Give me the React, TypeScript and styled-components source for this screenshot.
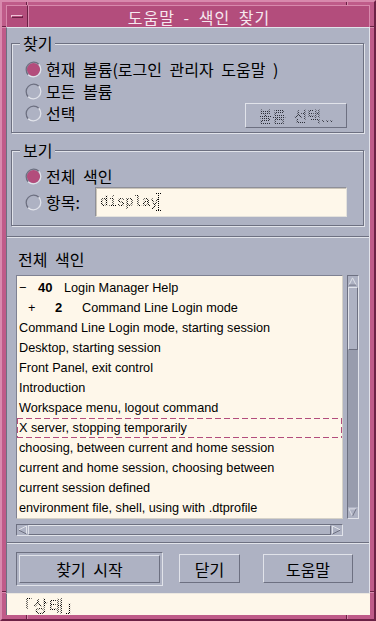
import React from "react";
import styled, { createGlobalStyle, css } from "styled-components";

// palette taken from the CDE dialog
const C = {
  frame: "#bf5b89",
  frameLight: "#d889ad",
  frameDark: "#6c2145",
  title: "#b34d7c",
  titleText: "#f6e8ef",
  body: "#aeb2c3",
  light: "#e1e3ea",
  dark: "#6d7081",
  trough: "#989cad",
  cream: "#fef7ea",
  accent: "#b34d7c",
};

const EN = `"Liberation Sans", Arial, sans-serif`;

// the bitmap korean font has wide blanks, so widen the spaces a bit
const kr = (size: number, lh = 18) => css`
  font: ${size}px/${lh}px "Noto Sans CJK KR", "Noto Sans", sans-serif;
  word-spacing: 4px;
`;

const GlobalStyle = createGlobalStyle`
  html, body { margin: 0; padding: 0; background: ${C.body}; }
  * { box-sizing: border-box; }
`;

const raised = css`
  border: 1px solid;
  border-color: ${C.light} ${C.dark} ${C.dark} ${C.light};
`;

const sunken = css`
  border: 1px solid;
  border-color: ${C.dark} ${C.light} ${C.light} ${C.dark};
`;

// disabled motif text is drawn as a 50% stipple
const stipple = (color: string) => css`
  background-image: repeating-conic-gradient(${color} 0 25%, transparent 0 50%);
  background-size: 2px 2px;
  -webkit-background-clip: text;
  background-clip: text;
  color: transparent;
`;

// STYLE
const Frame = styled.div`
  width: 376px;
  height: 621px;
  display: flex;
  flex-direction: column;
  padding: 3px 4px 4px 4px;
  border: 2px solid;
  border-color: ${C.frameLight} ${C.frameDark} ${C.frameDark} ${C.frameLight};
  background-color: ${C.frame};
  background-image: linear-gradient(${C.frameDark}, ${C.frameDark}),
    linear-gradient(${C.frameLight}, ${C.frameLight}),
    linear-gradient(${C.frameDark}, ${C.frameDark}),
    linear-gradient(${C.frameLight}, ${C.frameLight}),
    linear-gradient(${C.frameDark}, ${C.frameDark}),
    linear-gradient(${C.frameLight}, ${C.frameLight}),
    linear-gradient(${C.frameDark}, ${C.frameDark}),
    linear-gradient(${C.frameLight}, ${C.frameLight});
  background-size: 1px 100%, 1px 100%, 1px 100%, 1px 100%, 100% 1px, 100% 1px,
    100% 1px, 100% 1px;
  background-position: 24px 0, 25px 0, 344px 0, 345px 0, 0 24px, 0 25px, 0 589px,
    0 590px;
  background-repeat: no-repeat;
`;

const TitleBar = styled.div`
  height: 22px;
  display: flex;
  background: ${C.title};
`;

const MenuButton = styled.div`
  width: 22px;
  display: flex;
  align-items: center;
  justify-content: center;
  border-top: 1px solid ${C.frameLight};
  border-left: 1px solid ${C.frameLight};
  border-right: 1px solid ${C.frameDark};
`;

const MenuDash = styled.span`
  width: 12px;
  height: 3px;
  border: 1px solid;
  border-color: #efc2d6 ${C.frameDark} ${C.frameDark} #efc2d6;
`;

const Title = styled.div`
  flex: 1;
  display: flex;
  align-items: center;
  justify-content: center;
  color: ${C.titleText};
  ${kr(16, 20)};
  letter-spacing: 1px;
  border-top: 1px solid ${C.frameLight};
  border-left: 1px solid ${C.frameLight};
  border-right: 1px solid ${C.frameLight};
`;

const Body = styled.div`
  flex: 1;
  display: flex;
  flex-direction: column;
  background: ${C.body};
  border-top: 1px solid ${C.light};
  border-left: 1px solid ${C.dark};
  border-right: 1px solid ${C.light};
  color: #000;
`;

const SearchArea = styled.div`
  padding: 6px 5px 0 4px;
`;

const Group = styled.fieldset<{ $gap?: number }>`
  margin: ${(p) => p.$gap ?? 0}px 0 0 0;
  padding: 6px 16px 8px 13px;
  border: 1px solid ${C.dark};
  box-shadow: inset 1px 1px 0 ${C.light}, 1px 1px 0 ${C.light};
  min-width: 0;
`;

const Legend = styled.legend`
  margin-left: -5px;
  padding: 0 3px;
  ${kr(16)};
  background: ${C.body};
`;

const OptionRow = styled.div<{ $h?: number }>`
  display: flex;
  align-items: center;
  height: ${(p) => p.$h ?? 22}px;
`;

const Option = styled.span`
  display: flex;
  align-items: center;
  gap: 4px;
  ${kr(16)};
  white-space: nowrap;
`;

const SmallButton = styled.div`
  ${raised};
  margin-left: auto;
  align-self: flex-start;
  margin-top: 1px;
  width: 102px;
  height: 25px;
  display: flex;
  align-items: center;
  justify-content: center;
  ${kr(15)};
  span {
    ${stipple("#2c2e38")};
  }
`;

const Field = styled.div`
  margin-left: auto;
  width: 252px;
  height: 30px;
  display: flex;
  align-items: center;
  padding-left: 4px;
  background: ${C.cream};
  border: 1px solid;
  border-color: #8e8f99 #e4e2dc #e4e2dc #8e8f99;
  box-shadow: inset 1px 1px 0 #cbc5b9;
  font: 14px/18px "Liberation Mono", monospace;
  span {
    ${stipple("#000")};
  }
`;

const Separator = styled.div<{ $mt?: number }>`
  margin-top: ${(p) => p.$mt ?? 0}px;
  border-top: 1px solid ${C.dark};
  border-bottom: 1px solid ${C.light};
`;

const ListSection = styled.div`
  padding: 12px 10px 6px 9px;
`;

const ListLabel = styled.div`
  ${kr(16)};
  padding-left: 2px;
  margin-bottom: 7px;
`;

const ListGrid = styled.div`
  display: grid;
  grid-template-columns: 327px 12px;
  grid-template-rows: 244px 12px;
  column-gap: 4px;
  row-gap: 5px;
`;

const List = styled.div`
  background: ${C.cream};
  border: 1px solid;
  border-color: #7e8192 #d6d2c8 #d6d2c8 #7e8192;
  padding-top: 2px;
  overflow: hidden;
`;

const dash = "#b34d7c 0 6px, transparent 6px 9px";

const Row = styled.div<{ $focused?: boolean }>`
  height: 20px;
  display: flex;
  align-items: center;
  padding-left: 2px;
  font: 12.7px/18px ${EN};
  white-space: nowrap;
  ${(p) =>
    p.$focused &&
    css`
      background: repeating-linear-gradient(90deg, ${dash}) top / 100% 1px no-repeat,
        repeating-linear-gradient(90deg, ${dash}) bottom / 100% 1px no-repeat,
        repeating-linear-gradient(180deg, ${dash}) left / 1px 100% no-repeat,
        repeating-linear-gradient(180deg, ${dash}) right / 1px 100% no-repeat;
    `}
`;

const Marker = styled.span<{ $level: number }>`
  margin-left: ${(p) => p.$level * 9}px;
  width: ${(p) => 19 + p.$level * 8}px;
`;

const Count = styled.span<{ $level: number }>`
  width: ${(p) => 26 + p.$level}px;
  font-weight: bold;
  font-size: 13px;
`;

const VScroll = styled.div`
  ${sunken};
  display: flex;
  flex-direction: column;
  background: ${C.trough};
`;

const HScroll = styled.div`
  ${sunken};
  display: flex;
  background: ${C.trough};
`;

const ArrowBox = styled.div<{ $vertical?: boolean }>`
  flex: none;
  width: ${(p) => (p.$vertical ? "100%" : "11px")};
  height: ${(p) => (p.$vertical ? "11px" : "100%")};
  background: ${C.body};
  display: flex;
  align-items: center;
  justify-content: center;
`;

const Thumb = styled.div<{ $size?: number }>`
  ${raised};
  background: ${C.body};
  ${(p) => (p.$size ? `flex: none; height: ${p.$size}px;` : "flex: 1;")}
`;

const TroughFill = styled.div`
  flex: 1;
`;

const ButtonRow = styled.div`
  flex: 1;
  display: flex;
  align-items: center;
  padding-left: 9px;
`;

const DefaultRing = styled.div`
  ${sunken};
  width: 147px;
  height: 34px;
  padding: 2px;
  display: flex;
`;

const PushButton = styled.div<{ $w?: number; $ml?: number }>`
  ${raised};
  width: ${(p) => (p.$w ? `${p.$w}px` : "100%")};
  height: ${(p) => (p.$w ? "29px" : "100%")};
  margin-left: ${(p) => p.$ml ?? 0}px;
  display: flex;
  align-items: center;
  justify-content: center;
  background: ${C.body};
  ${kr(16)};
`;

const StatusBar = styled.div`
  height: 22px;
  display: flex;
  align-items: center;
  padding-left: 9px;
  background: ${C.cream};
  border-top: 1px solid #ece8e0;
  border-left: 1px solid ${C.dark};
  ${kr(16)};
  letter-spacing: 1px;
  span {
    ${stipple("#000")};
  }
`;

// COMP
const Radio = ({ on }: { on?: boolean }) => (
  <svg width="17" height="17" viewBox="0 0 17 17">
    {on && <circle cx="8.5" cy="8.5" r="6.6" fill={C.accent} />}
    <path d="M3.2 13.8A7.5 7.5 0 0 1 13.8 3.2" fill="none" stroke={C.dark} strokeWidth="1.3" />
    <path d="M13.8 3.2A7.5 7.5 0 0 1 3.2 13.8" fill="none" stroke={C.light} strokeWidth="1.3" />
  </svg>
);

const Caret = () => (
  <svg width="5" height="18" viewBox="0 0 5 18" style={{ marginLeft: -3 }}>
    <path d="M0 0.5H5M0 17.5H5M2.5 0V18" stroke="#000" strokeWidth="1" strokeDasharray="1 1" />
  </svg>
);

type Dir = "up" | "down" | "left" | "right";

const Arrow = ({ dir }: { dir: Dir }) => {
  const shapes: Record<Dir, { lit: string; shade: string }> = {
    up: { lit: "M1 9.5L5 1.5L9 9.5", shade: "M1 9.5H9" },
    down: { lit: "M1 1.5H9M1 1.5L5 9.5", shade: "M5 9.5L9 1.5" },
    left: { lit: "M9.5 1L1.5 5M9.5 1V9", shade: "M1.5 5L9.5 9" },
    right: { lit: "M1.5 1V9M1.5 1L9.5 5", shade: "M9.5 5L1.5 9" },
  };
  const s = shapes[dir];
  return (
    <svg width="11" height="11" viewBox="0 0 11 11">
      <path d={s.lit} fill="none" stroke={C.light} strokeWidth="1" />
      <path d={s.shade} fill="none" stroke={C.dark} strokeWidth="1" />
    </svg>
  );
};

type Entry = { label: string; count?: number; marker?: string; level?: number };

const entries: Entry[] = [
  { label: "Login Manager Help", count: 40, marker: "−", level: 0 },
  { label: "Command Line Login mode", count: 2, marker: "+", level: 1 },
  { label: "Command Line Login mode, starting session" },
  { label: "Desktop, starting session" },
  { label: "Front Panel, exit control" },
  { label: "Introduction" },
  { label: "Workspace menu, logout command" },
  { label: "X server, stopping temporarily" },
  { label: "choosing, between current and home session" },
  { label: "current and home session, choosing between" },
  { label: "current session defined" },
  { label: "environment file, shell, using with .dtprofile" },
];

const FOCUSED = 7;

const App = () => {
  return (
    <>
      <GlobalStyle />
      <Frame>
        <TitleBar>
          <MenuButton>
            <MenuDash />
          </MenuButton>
          <Title>도움말 - 색인 찾기</Title>
        </TitleBar>

        <Body>
          <SearchArea>
            <Group>
              <Legend>찾기</Legend>
              <OptionRow>
                <Option>
                  <Radio on />
                  현재 볼륨(로그인 관리자 도움말 )
                </Option>
              </OptionRow>
              <OptionRow>
                <Option>
                  <Radio />
                  모든 볼륨
                </Option>
              </OptionRow>
              <OptionRow>
                <Option>
                  <Radio />
                  선택
                </Option>
                <SmallButton>
                  <span>볼륨 선택...</span>
                </SmallButton>
              </OptionRow>
            </Group>

            <Group $gap={8}>
              <Legend>보기</Legend>
              <OptionRow>
                <Option>
                  <Radio on />
                  전체 색인
                </Option>
              </OptionRow>
              <OptionRow $h={30}>
                <Option>
                  <Radio />
                  항목:
                </Option>
                <Field>
                  <span>display</span>
                  <Caret />
                </Field>
              </OptionRow>
            </Group>
          </SearchArea>

          <Separator $mt={10} />

          <ListSection>
            <ListLabel>전체 색인</ListLabel>
            <ListGrid>
              <List>
                {entries.map((e, i) => (
                  <Row key={e.label} $focused={i === FOCUSED}>
                    {e.marker && <Marker $level={e.level ?? 0}>{e.marker}</Marker>}
                    {e.count !== undefined && <Count $level={e.level ?? 0}>{e.count}</Count>}
                    <span>{e.label}</span>
                  </Row>
                ))}
              </List>
              <VScroll>
                <ArrowBox $vertical>
                  <Arrow dir="up" />
                </ArrowBox>
                <Thumb $size={63} />
                <TroughFill />
                <ArrowBox $vertical>
                  <Arrow dir="down" />
                </ArrowBox>
              </VScroll>
              <HScroll>
                <ArrowBox>
                  <Arrow dir="left" />
                </ArrowBox>
                <Thumb />
                <ArrowBox>
                  <Arrow dir="right" />
                </ArrowBox>
              </HScroll>
            </ListGrid>
          </ListSection>

          <Separator />

          <ButtonRow>
            <DefaultRing>
              <PushButton>찾기 시작</PushButton>
            </DefaultRing>
            <PushButton $w={61} $ml={16}>
              닫기
            </PushButton>
            <PushButton $w={90} $ml={23}>
              도움말
            </PushButton>
          </ButtonRow>
        </Body>

        <StatusBar>
          <span>「상태」</span>
        </StatusBar>
      </Frame>
    </>
  );
};

export default App;
